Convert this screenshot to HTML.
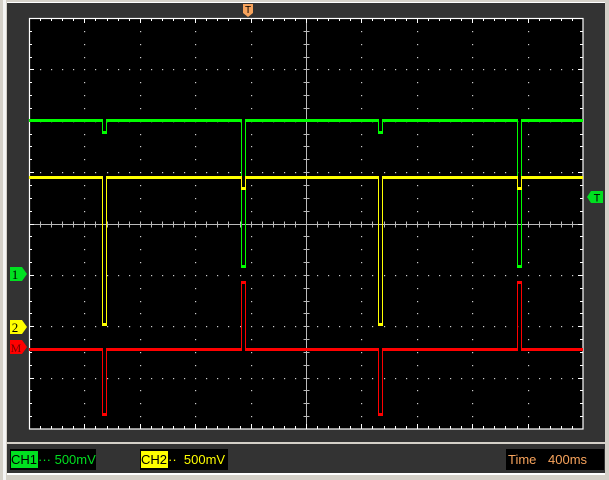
<!DOCTYPE html>
<html><head><style>
body{margin:0;width:609px;height:480px;overflow:hidden;background:#d4d0c8;font-family:"Liberation Sans",sans-serif}
.abs{position:absolute}
</style></head><body>
<div class="abs" style="left:0;top:0;width:609px;height:480px;background:#d4d0c8"></div>
<div class="abs" style="left:3px;top:0;width:3px;height:480px;background:#f4f4f4"></div>
<div class="abs" style="left:7px;top:3px;width:598px;height:472px;background:#333"></div>
<div class="abs" style="left:7px;top:2px;width:598px;height:1px;background:#fff"></div>
<div class="abs" style="left:7px;top:442px;width:598px;height:2px;background:#d4d0c8"></div>
<div class="abs" style="left:7px;top:473px;width:598px;height:2px;background:#fff"></div>
<svg class="abs" style="left:0;top:0" width="609" height="480" id="s">
<rect x="29" y="18" width="554" height="411" fill="#000"/>
<g id="g"></g>
<rect x="29.5" y="18.5" width="553.5" height="410.5" fill="none" stroke="#fff" stroke-width="1.2"/>
<g id="tr"></g>
<polygon points="243,4 253,4 253,13 248,17 243,13" fill="#f7a35c"/>
<text x="248" y="13" font-size="10" text-anchor="middle" fill="#000" font-family="Liberation Sans">T</text>
<polygon points="10,267 22,267 27,274 22,281 10,281" fill="#00e020"/>
<text x="15" y="279" font-size="13" text-anchor="middle" fill="#000" font-family="Liberation Serif">1</text>
<polygon points="10,320 22,320 27,327 22,334 10,334" fill="#ffff00"/>
<text x="15" y="332" font-size="13" text-anchor="middle" fill="#000" font-family="Liberation Serif">2</text>
<polygon points="10,340 22,340 27,347 22,354 10,354" fill="#ff0000"/>
<text x="16" y="352" font-size="12" text-anchor="middle" fill="#700" font-family="Liberation Serif">M</text>
<polygon points="603,191 591,191 587,197 591,203 603,203" fill="#00e020"/>
<text x="597" y="201.5" font-size="11" text-anchor="middle" fill="#000" font-family="Liberation Sans">T</text>
</svg>
<div class="abs" style="left:10px;top:449px;width:86px;height:21px;background:#000"></div>
<div class="abs" style="left:11px;top:451px;width:27px;height:17px;background:#00e020;color:#000;font-size:13px;line-height:17px">CH1</div>
<div class="abs" style="left:38px;top:451px;height:17px;color:#00e020;font-size:13px;line-height:17px;white-space:pre">··· 500mV</div>
<div class="abs" style="left:140px;top:449px;width:88px;height:21px;background:#000"></div>
<div class="abs" style="left:141px;top:451px;width:27px;height:17px;background:#ffff00;color:#000;font-size:13px;line-height:17px">CH2</div>
<div class="abs" style="left:168px;top:451px;height:17px;color:#ffff00;font-size:13px;line-height:17px;white-space:pre">··  500mV</div>
<div class="abs" style="left:506px;top:449px;width:98px;height:21px;background:#000"></div>
<div class="abs" style="left:508px;top:449px;color:#f7a35c;font-size:13px;line-height:21px">Time</div>
<div class="abs" style="left:548px;top:449px;color:#f7a35c;font-size:13px;line-height:21px">400ms</div>
<script>
var g=document.getElementById('g'),h='';
var L=29,T=18,W=554,H=411,dx=W/10,dy=H/8;
for(var i=1;i<10;i++){var x=Math.round(L+i*dx);
 if(i==5)continue;
 for(var j=1;j<32;j++){if(j%4==0)continue;h+='<rect x="'+x+'" y="'+Math.round(T+j*dy/4)+'" width="1.2" height="1.2" fill="#ccc"/>';}
 for(var j=1;j<8;j++)h+='<rect x="'+x+'" y="'+Math.round(T+j*dy)+'" width="1.2" height="1.2" fill="#ccc"/>';}
for(var j=1;j<8;j++){var y=Math.round(T+j*dy);
 if(j==4)continue;
 for(var i=1;i<50;i++){if(i%5==0)continue;h+='<rect x="'+Math.round(L+i*dx/5)+'" y="'+y+'" width="1.2" height="1.2" fill="#ccc"/>';}}
var cx=Math.round(L+5*dx)+0.5,cy=Math.round(T+4*dy)+0.5;
h+='<line x1="'+cx+'" y1="'+T+'" x2="'+cx+'" y2="'+(T+H)+'" stroke="#bbb"/>';
h+='<line x1="'+L+'" y1="'+cy+'" x2="'+(L+W)+'" y2="'+cy+'" stroke="#bbb"/>';
for(var i=1;i<50;i++){var x=Math.round(L+i*dx/5)+0.5;
 h+='<line x1="'+x+'" y1="'+(cy-3)+'" x2="'+x+'" y2="'+(cy+3)+'" stroke="#bbb"/>';
 var t=(i%5==0)?5:3;
 h+='<line x1="'+x+'" y1="'+T+'" x2="'+x+'" y2="'+(T+t)+'" stroke="#fff"/>';
 h+='<line x1="'+x+'" y1="'+(T+H-t)+'" x2="'+x+'" y2="'+(T+H)+'" stroke="#fff"/>';}
for(var j=1;j<32;j++){var y=Math.round(T+j*dy/4)+0.5;
 h+='<line x1="'+(cx-3)+'" y1="'+y+'" x2="'+(cx+3)+'" y2="'+y+'" stroke="#bbb"/>';
 var t=(j%4==0)?5:3;
 h+='<line x1="'+L+'" y1="'+y+'" x2="'+(L+t)+'" y2="'+y+'" stroke="#fff"/>';
 h+='<line x1="'+(L+W-t)+'" y1="'+y+'" x2="'+(L+W)+'" y2="'+y+'" stroke="#fff"/>';}
g.innerHTML=h;
// traces
var t='';
function R(x,y,w,hh,c){t+='<rect x="'+x+'" y="'+y+'" width="'+w+'" height="'+hh+'" fill="'+c+'"/>';}
function trace(base,c,ends){
 var xs=[102,241,378,517];
 var px=29;
 for(var k=0;k<4;k++){R(px,base-1,xs[k]-px+1,3,c);px=xs[k]+4;}
 R(px,base-1,583-px,3,c);
 for(var k=0;k<4;k++){var e=ends[k],x=xs[k];
  var y0=Math.min(base,e),y1=Math.max(base,e);
  R(x,y0,1,y1-y0+1,c);R(x+4,y0,1,y1-y0+1,c);
  R(x,e>base?e-2:e,5,3,c);}
}
trace(120,'#00ff00',[133,267,133,267]);
trace(177,'#ffff00',[325,189,325,189]);
trace(349,'#ff0000',[415,281,415,281]);
document.getElementById('tr').innerHTML=t;
</script>
</body></html>
